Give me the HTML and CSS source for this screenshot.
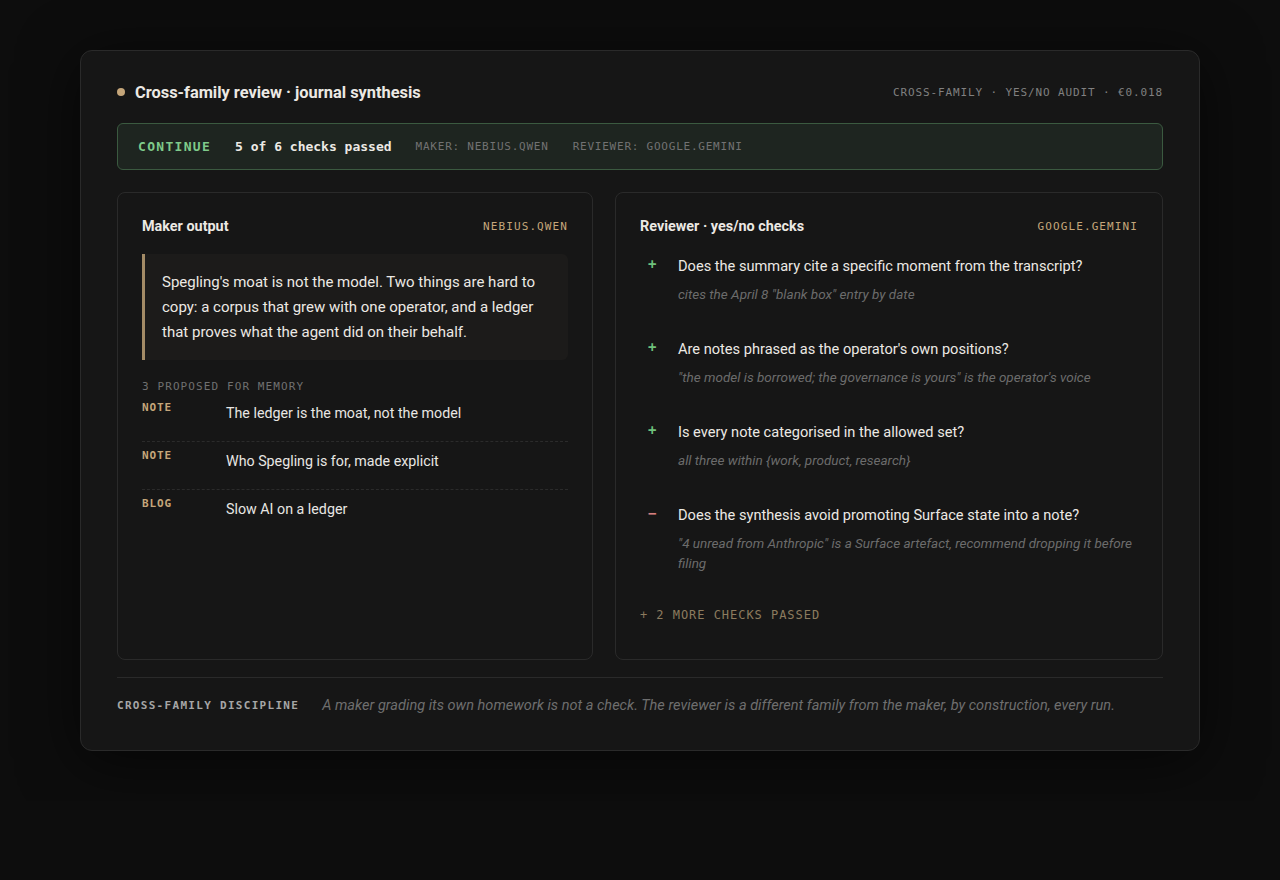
FILE: index.html
```html
<!DOCTYPE html>
<html lang="en">
<head>
  <meta charset="UTF-8" />
  <meta name="viewport" content="width=device-width, initial-scale=1.0" />
  <title>Cross-family review</title>
  <link rel="stylesheet" href="styles.css">
</head>
<body>
  <div class="card">
    <div class="head">
      <div class="title"><span class="dot"></span>Cross-family review · journal synthesis</div>
      <div class="meta">CROSS-FAMILY · YES/NO AUDIT · €0.018</div>
    </div>

    <div class="status">
      <span class="verdict">CONTINUE</span>
      <span class="score">5 of 6 checks passed</span>
      <span class="who">MAKER: NEBIUS.QWEN</span>
      <span class="who">REVIEWER: GOOGLE.GEMINI</span>
    </div>

    <div class="panels">
      <div class="panel">
        <div class="panel-head">
          <h3>Maker output</h3>
          <span class="model">NEBIUS.QWEN</span>
        </div>
        <blockquote class="quote">Spegling's moat is not the model. Two things are hard to copy: a corpus that grew with one operator, and a ledger that proves what the agent did on their behalf.</blockquote>
        <div class="label">3 PROPOSED FOR MEMORY</div>
        <ul class="memory">
          <li><span class="tag">NOTE</span><span>The ledger is the moat, not the model</span></li>
          <li><span class="tag">NOTE</span><span>Who Spegling is for, made explicit</span></li>
          <li><span class="tag">BLOG</span><span>Slow AI on a ledger</span></li>
        </ul>
      </div>

      <div class="panel">
        <div class="panel-head">
          <h3>Reviewer · yes/no checks</h3>
          <span class="model">GOOGLE.GEMINI</span>
        </div>
        <ul class="checks">
          <li>
            <span class="sign pass">+</span>
            <div>
              <div class="q">Does the summary cite a specific moment from the transcript?</div>
              <div class="why">cites the April 8 "blank box" entry by date</div>
            </div>
          </li>
          <li>
            <span class="sign pass">+</span>
            <div>
              <div class="q">Are notes phrased as the operator's own positions?</div>
              <div class="why">"the model is borrowed; the governance is yours" is the operator's voice</div>
            </div>
          </li>
          <li>
            <span class="sign pass">+</span>
            <div>
              <div class="q">Is every note categorised in the allowed set?</div>
              <div class="why">all three within {work, product, research}</div>
            </div>
          </li>
          <li>
            <span class="sign fail">−</span>
            <div>
              <div class="q">Does the synthesis avoid promoting Surface state into a note?</div>
              <div class="why">"4 unread from Anthropic" is a Surface artefact, recommend dropping it before filing</div>
            </div>
          </li>
        </ul>
        <div class="more">+ 2 MORE CHECKS PASSED</div>
      </div>
    </div>

    <div class="foot">
      <span class="foot-label">CROSS-FAMILY DISCIPLINE</span>
      <span class="foot-text">A maker grading its own homework is not a check. The reviewer is a different family from the maker, by construction, every run.</span>
    </div>
  </div>
</body>
</html>
```

FILE: styles.css
```css
body {
  margin: 0;
  padding: 50px 0;
  background: #0d0d0d;
  color: #e8e6e3;
  font-family: Roboto, "Noto Sans", sans-serif;
}
.card {
  width: 1046px;
  margin: 0 auto;
  padding: 31px 36px 34px;
  background: #161616;
  border: 1px solid #2a2a2a;
  border-radius: 12px;
  box-shadow: 0 10px 60px rgba(0,0,0,0.6);
}
.head {
  display: flex;
  justify-content: space-between;
  align-items: center;
  height: 20px;
}
.title {
  display: flex;
  align-items: center;
  font-size: 16.4px;
  font-weight: 700;
  color: #ece9e4;
}
.dot {
  width: 8px;
  height: 8px;
  border-radius: 50%;
  background: #c5a67a;
  margin: 0 10px 0 0;
}
.meta {
  font-family: "DejaVu Sans Mono", "Liberation Mono", monospace;
  font-size: 11px;
  letter-spacing: 0.08em;
  color: #808080;
}
.status {
  margin-top: 21px;
  display: flex;
  align-items: center;
  gap: 24px;
  padding: 14px 20px;
  background: #1e2520;
  border: 1px solid #3b5a40;
  border-radius: 6px;
  font-family: "DejaVu Sans Mono", "Liberation Mono", monospace;
  line-height: 17px;
}
.verdict {
  font-size: 13px;
  font-weight: 700;
  letter-spacing: 0.1em;
  color: #7fca8a;
}
.score {
  font-size: 13px;
  font-weight: 700;
  color: #ece9e4;
}
.who {
  font-size: 11px;
  letter-spacing: 0.07em;
  color: #727272;
}
.panels {
  margin-top: 22px;
  display: grid;
  grid-template-columns: 476px 1fr;
  gap: 22px;
}
.panel {
  border: 1px solid #2a2a2a;
  border-radius: 8px;
  padding: 24px;
}
.panel-head {
  display: flex;
  justify-content: space-between;
  align-items: center;
  height: 18px;
}
.panel-head h3 {
  margin: 0;
  font-size: 14.4px;
  font-weight: 700;
  color: #ece9e4;
}
.model {
  font-family: "DejaVu Sans Mono", "Liberation Mono", monospace;
  font-size: 11px;
  letter-spacing: 0.1em;
  color: #c5a67a;
}
.quote {
  margin: 19px 0 0;
  padding: 16px 20px 15px 17px;
  background: #1c1b1a;
  border-left: 3px solid #a38b66;
  border-radius: 0 6px 6px 0;
  font-size: 15px;
  line-height: 25px;
  color: #ece9e4;
}
.label {
  margin-top: 20px;
  font-family: "DejaVu Sans Mono", "Liberation Mono", monospace;
  font-size: 11px;
  line-height: 14px;
  letter-spacing: 0.1em;
  color: #707070;
}
.memory {
  list-style: none;
  margin: 0;
  padding: 0;
}
.memory li {
  display: flex;
  align-items: flex-start;
  padding: 7px 0 16px;
  border-bottom: 1px dashed #2b2b2b;
  font-size: 14.25px;
  line-height: 24px;
  color: #e8e6e3;
}
.memory li:last-child {
  border-bottom: none;
}
.tag {
  width: 84px;
  flex: none;
  font-family: "DejaVu Sans Mono", "Liberation Mono", monospace;
  font-size: 11px;
  font-weight: 700;
  line-height: 14px;
  letter-spacing: 0.08em;
  color: #c5a67a;
}
.checks {
  list-style: none;
  margin: 20px 0 0;
  padding: 0;
}
.checks li {
  display: flex;
  align-items: flex-start;
  margin-bottom: 34px;
}
.sign {
  width: 30px;
  padding-left: 8px;
  flex: none;
  font-family: "DejaVu Sans Mono", "Liberation Mono", monospace;
  font-size: 14px;
  line-height: 18px;
  font-weight: 700;
}
.sign.pass { color: #6fc27c; }
.sign.fail { color: #d67f7f; }
.q {
  font-size: 14.6px;
  line-height: 22px;
  color: #ece9e4;
}
.why {
  margin-top: 7px;
  font-size: 13.5px;
  line-height: 20px;
  font-style: italic;
  color: #6c6c6c;
}
.more {
  font-family: "DejaVu Sans Mono", "Liberation Mono", monospace;
  font-size: 12px;
  line-height: 16px;
  letter-spacing: 0.08em;
  color: #8c7b5e;
  padding-bottom: 12px;
}
.foot {
  margin-top: 17px;
  padding-top: 18px;
  border-top: 1px solid #2a2a2a;
  display: flex;
  align-items: center;
  gap: 23px;
  line-height: 20px;
}
.foot-label {
  font-family: "DejaVu Sans Mono", "Liberation Mono", monospace;
  font-size: 11px;
  font-weight: 700;
  letter-spacing: 1.3px;
  color: #a6a6a6;
}
.foot-text {
  font-size: 14.55px;
  font-style: italic;
  color: #6e6e6e;
}
```
